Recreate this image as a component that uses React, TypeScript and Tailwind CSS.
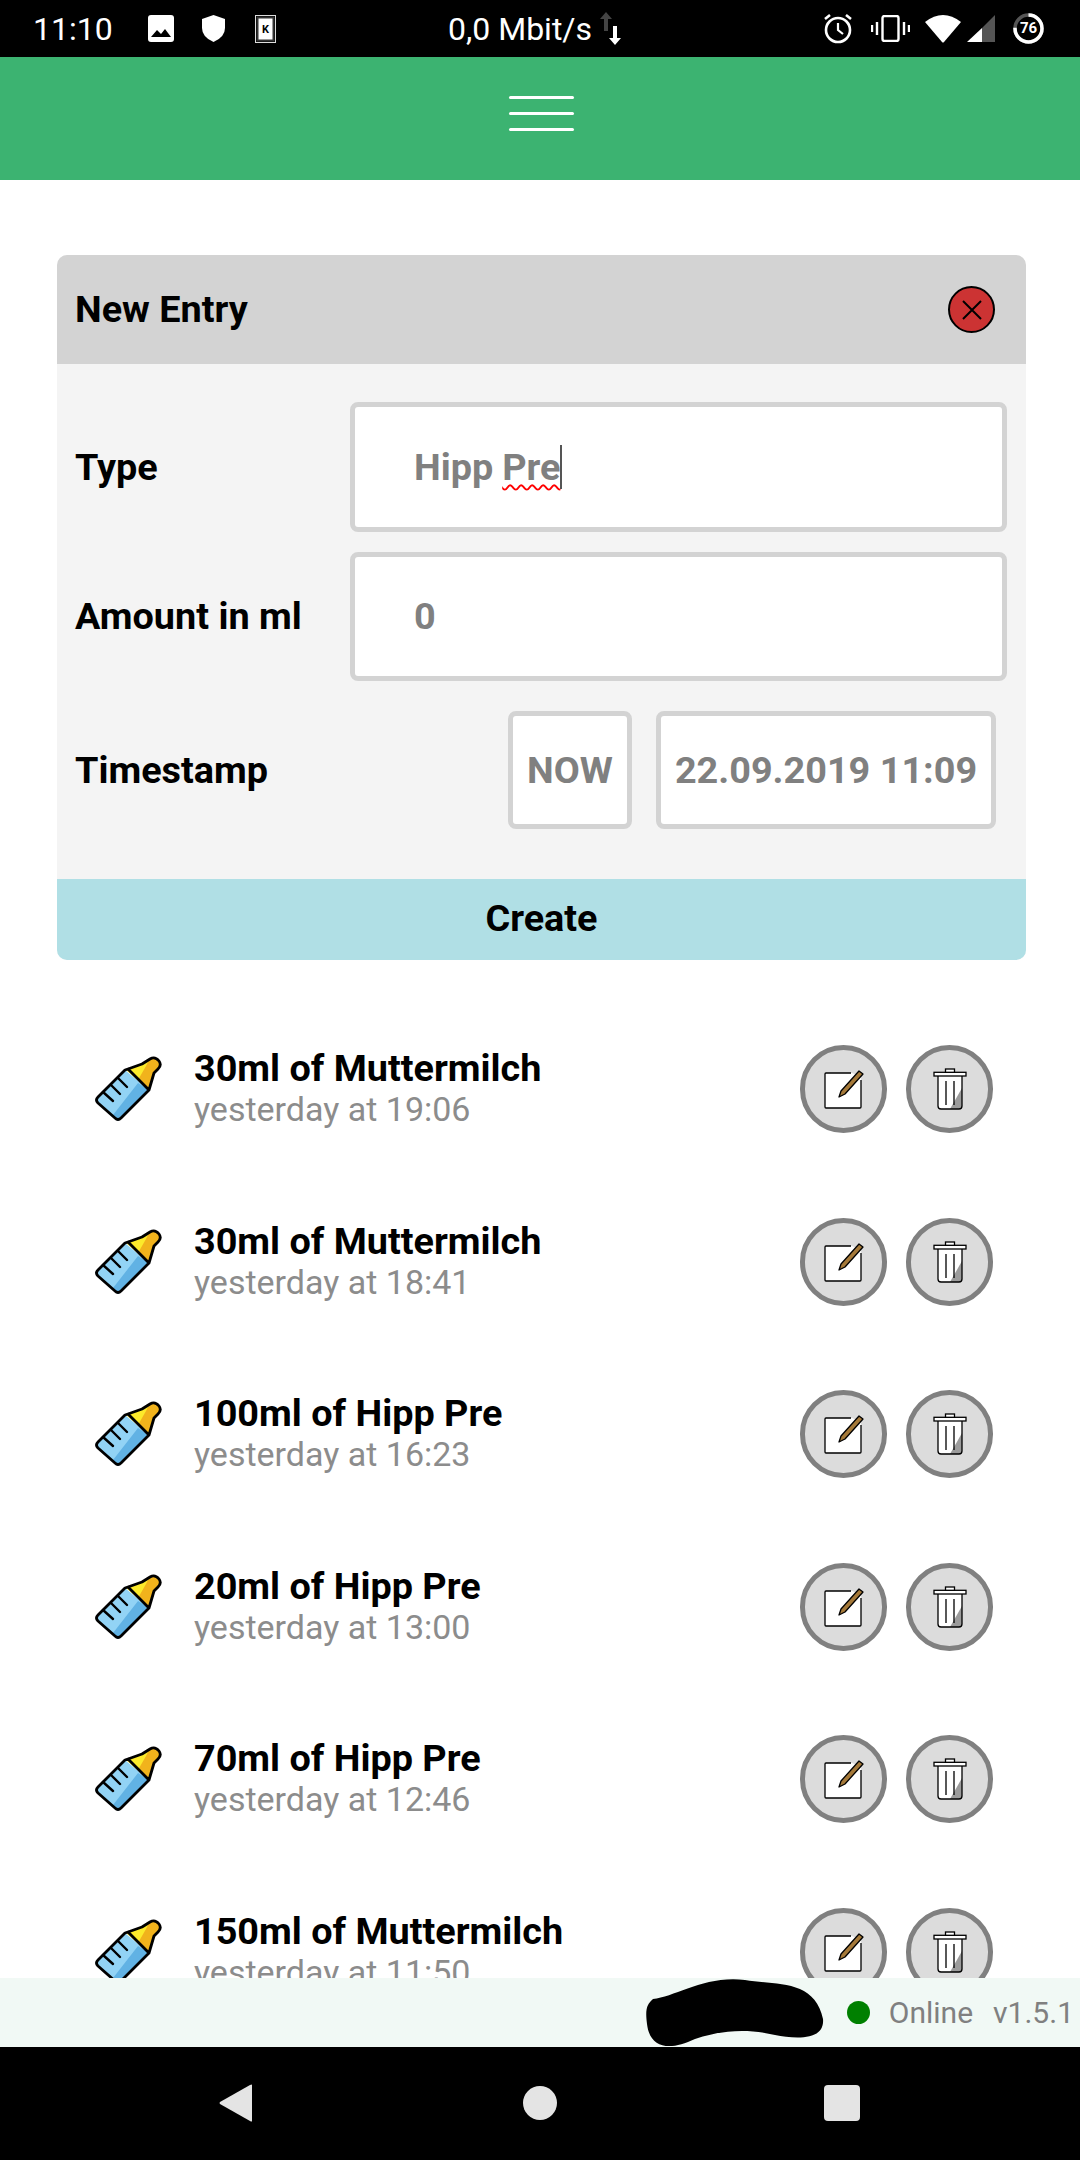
const entries = [
  { title: '30ml of Muttermilch', time: 'yesterday at 19:06' },
  { title: '30ml of Muttermilch', time: 'yesterday at 18:41' },
  { title: '100ml of Hipp Pre', time: 'yesterday at 16:23' },
  { title: '20ml of Hipp Pre', time: 'yesterday at 13:00' },
  { title: '70ml of Hipp Pre', time: 'yesterday at 12:46' },
  { title: '150ml of Muttermilch', time: 'yesterday at 11:50' },
];

const BottleIcon = () => (
  <svg width="70" height="70" viewBox="24 24 70 70" className="shrink-0">
    <path d="M56 40 L72 34 L80 28 L86 28 L90 33 L90 37 L84 43 L79 60 Z" fill="#fcea2b" />
    <path d="M68 50 L76 36 L80 28 L86 28 L90 33 L90 37 L84 43 L79 60 Z" fill="#f1b31c" />
    <path d="M26 70 L55 40 L79 60 L48 91 Z" fill="#92d3f5" />
    <path d="M43 85 L68 53 L79 60 L48 91 Z" fill="#61b2e4" />
    <path
      d="M58 39 L72 34 L80 29 Q85 26 89 31 Q92 35 88 39 L84 43 L79 60 M58 39 L79 60 L51 88 Q48 91 45 88 L28 73 Q25 70 28 67 L55 40 Z"
      fill="none"
      stroke="#000"
      strokeWidth="2.8"
      strokeLinejoin="round"
      strokeLinecap="round"
    />
    <path d="M33 62 L43 71 M41 55 L50 64 M48 48 L57 57" stroke="#000" strokeWidth="2.4" strokeLinecap="round" />
  </svg>
);

const EditIcon = () => (
  <svg width="42" height="42" viewBox="0 0 42 42">
    <path d="M2 5 H29 L38 9 V38 Q38 40 36 40 H4 Q2 40 2 38 Z" fill="#fff" />
    <path d="M28 5 H3 Q2 5 2 6 V39 Q2 40 3 40 H37 Q38 40 38 39 V12" fill="none" stroke="#000" strokeWidth="1.3" />
    <path d="M18 23 L36 3 L40 6 L22 26 L16 29 Z" fill="#a57939" stroke="#000" strokeWidth="1.3" strokeLinejoin="round" />
  </svg>
);

const TrashIcon = () => (
  <svg width="34" height="42" viewBox="0 0 34 42">
    <path d="M5 8 H29 V38 Q29 41 26 41 H8 Q5 41 5 38 Z" fill="#fff" />
    <path d="M29 20 V38 Q29 41 26 41 H17 Z" fill="#9b9b9b" />
    <path d="M5 8 V38 Q5 41 8 41 H26 Q29 41 29 38 V8" fill="none" stroke="#000" strokeWidth="1.3" />
    <rect x="1" y="4.3" width="32" height="3.7" fill="#fff" stroke="#000" strokeWidth="1.3" />
    <rect x="12.5" y="1" width="9" height="3.3" fill="#fff" stroke="#000" strokeWidth="1.3" />
    <path d="M13 13 V37 M21 13 V37" stroke="#000" strokeWidth="1.3" />
  </svg>
);

const StatusBar = () => (
  <div className="flex h-[57px] shrink-0 items-center bg-black pl-[33px] text-[32px] leading-none text-white">
    <span className="w-[115px]">11:10</span>
    <svg width="26" height="27" viewBox="0 0 26 27">
      <rect width="26" height="27" rx="3" fill="#fff" />
      <path d="M3 22 L9 15 L13 19 L17 14 L23 22 Z" fill="#000" />
    </svg>
    <svg width="23" height="27" viewBox="0 0 23 27" className="ml-[28px]">
      <path d="M11.5 0 L23 4 V13 Q23 22 11.5 27 Q0 22 0 13 V4 Z" fill="#fff" />
    </svg>
    <svg width="21" height="28" viewBox="0 0 21 28" className="ml-[30px]">
      <rect x="0.5" y="0.5" width="20" height="27" fill="none" stroke="#ddd" />
      <rect x="2.5" y="2.5" width="16" height="23" fill="#fff" stroke="#333" strokeWidth="2" />
      <text x="10.5" y="18" textAnchor="middle" fontSize="11" fontWeight="700" fontFamily="Roboto, sans-serif" fill="#000">K</text>
    </svg>
    <span className="ml-[172px]">0,0 Mbit/s</span>
    <svg width="23" height="33" viewBox="0 0 23 33" className="ml-[7px]">
      <path d="M7 0 L13 7 H9 V19 H5 V7 H1 Z" fill="#444" />
      <path d="M16 33 L10 26 H14 V14 H18 V26 H22 Z" fill="#fff" />
    </svg>
    <svg width="30" height="31" viewBox="0 0 30 31" className="ml-[201px]">
      <circle cx="15" cy="17" r="12" fill="none" stroke="#fff" strokeWidth="2.6" />
      <path d="M15 10 V17 L20 21" fill="none" stroke="#fff" strokeWidth="2.2" />
      <path d="M2 6 L7 2 M28 6 L23 2" stroke="#fff" strokeWidth="2.6" />
    </svg>
    <svg width="39" height="27" viewBox="0 0 39 27" className="ml-[18px]">
      <rect x="11.5" y="1" width="16" height="25" rx="2" fill="none" stroke="#fff" strokeWidth="2.4" />
      <path d="M6 7 V20 M1 10 V17 M33 7 V20 M38 10 V17" stroke="#fff" strokeWidth="2.4" />
    </svg>
    <svg width="36" height="29" viewBox="0 0 36 29" className="ml-[15px]">
      <path d="M0 8 Q18 -6 36 8 L19 28 Q18 29 17 28 Z" fill="#fff" />
    </svg>
    <svg width="28" height="27" viewBox="0 0 28 27" className="ml-[6px]">
      <path d="M28 0 V27 H15 V13 Z" fill="#555" />
      <path d="M15 13 V27 H0 Z" fill="#fff" />
    </svg>
    <div className="relative ml-[18px] flex h-[31px] w-[31px] items-center justify-center">
      <svg width="31" height="31" viewBox="0 0 31 31" className="absolute inset-0">
        <circle cx="15.5" cy="15.5" r="13.5" fill="none" stroke="#555" strokeWidth="3.5" />
        <circle cx="15.5" cy="15.5" r="13.5" fill="none" stroke="#fff" strokeWidth="3.5" strokeDasharray="64 85" transform="rotate(-90 15.5 15.5)" />
      </svg>
      <span className="relative text-[15px] font-bold">76</span>
    </div>
  </div>
);

export default function App() {
  return (
    <div className="flex h-[2160px] w-[1080px] flex-col overflow-hidden bg-white font-['Roboto',sans-serif] text-black">
      <StatusBar />

      <header className="flex h-[123px] shrink-0 items-center justify-center bg-[#3cb371] pb-[11px] pl-[3px]">
        <div className="flex w-[65px] flex-col gap-[13px]">
          <div className="h-[3px] rounded-full bg-white" />
          <div className="h-[3px] rounded-full bg-white" />
          <div className="h-[3px] rounded-full bg-white" />
        </div>
      </header>

      <main className="min-h-0 flex-1 overflow-hidden">
        <section className="mx-[57px] mr-[54px] mt-[75px] overflow-hidden rounded-[10px] bg-[#f4f4f4]">
          <div className="flex h-[109px] items-center justify-between bg-[#d3d3d3] pl-[18px] pr-[31px]">
            <h2 className="text-[37.8px] font-bold">New Entry</h2>
            <div className="flex h-[47px] w-[47px] items-center justify-center rounded-full border-2 border-black bg-[#cc3333]">
              <svg width="24" height="24" viewBox="0 0 24 24">
                <path d="M3 3 L21 21 M21 3 L3 21" stroke="#000" strokeWidth="2" />
              </svg>
            </div>
          </div>

          <div className="pb-[50px] pl-[18px] pr-[19px] pt-[38px]">
            <div className="flex h-[130px] items-center justify-between">
              <span className="text-[37.8px] font-bold">Type</span>
              <div className="flex h-full w-[657px] items-center rounded-[8px] border-[5px] border-[#d3d3d3] bg-white pl-[59px] text-[37.8px] font-bold text-[#808080]">
                <span>Hipp</span>
                <span className="ml-[9px] underline decoration-[#ff0000] decoration-wavy decoration-2 underline-offset-4">Pre</span>
                <span className="h-[44px] w-[2px] bg-[#555]" />
              </div>
            </div>
            <div className="mt-[20px] flex h-[129px] items-center justify-between">
              <span className="text-[37.8px] font-bold">Amount in ml</span>
              <div className="flex h-full w-[657px] items-center rounded-[8px] border-[5px] border-[#d3d3d3] bg-white pl-[59px] text-[37.8px] font-bold text-[#808080]">
                0
              </div>
            </div>
            <div className="mt-[30px] flex h-[118px] items-center">
              <span className="text-[37.8px] font-bold">Timestamp</span>
              <div className="ml-auto mr-[11px] flex h-full gap-[24px] text-[37.8px] font-bold text-[#808080]">
                <div className="flex w-[124px] items-center justify-center rounded-[8px] border-[5px] border-[#d3d3d3] bg-white">NOW</div>
                <div className="flex w-[340px] items-center justify-center rounded-[8px] border-[5px] border-[#d3d3d3] bg-white">22.09.2019 11:09</div>
              </div>
            </div>
          </div>

          <div className="flex h-[81px] items-center justify-center bg-[#b0dfe5] pb-[2px] text-[37.8px] font-bold">Create</div>
        </section>

        <ul className="mt-[43px]">
          {entries.map((entry) => (
            <li key={entry.time} className="flex h-[172.5px] items-center pl-[94px] pr-[87px]">
              <BottleIcon />
              <div className="ml-[30px] flex-1 pb-[2px]">
                <div className="text-[37.8px] font-bold leading-[42px]">{entry.title}</div>
                <div className="text-[34px] leading-[40px] text-[#8c8c8c]">{entry.time}</div>
              </div>
              <div className="flex gap-[19px]">
                <button className="flex h-[88px] w-[87px] items-center justify-center rounded-full border-[5px] border-[#808080] bg-[#dcdcdc]">
                  <EditIcon />
                </button>
                <button className="flex h-[88px] w-[87px] items-center justify-center rounded-full border-[5px] border-[#808080] bg-[#dcdcdc]">
                  <TrashIcon />
                </button>
              </div>
            </li>
          ))}
        </ul>
      </main>

      <footer className="relative flex h-[69px] shrink-0 items-center justify-end bg-[#f1f9f5] pr-[6px] text-[30px] text-[#808080]">
        <svg width="180" height="68" viewBox="0 0 180 68" className="absolute left-[645px] top-[1px]">
          <path d="M8 20 C30 18 60 -4 100 1 C130 6 170 0 178 40 C180 62 150 60 130 56 C105 50 80 50 50 60 C25 72 5 70 2 45 C0 30 2 25 8 20 Z" fill="#000" />
        </svg>
        <span className="h-[23px] w-[23px] rounded-full bg-[#008000]" />
        <span className="ml-[19px]">Online</span>
        <span className="ml-[20px]">v1.5.1</span>
      </footer>

      <nav className="flex h-[113px] shrink-0 items-center bg-black pb-[2px]">
        <svg width="34" height="38" viewBox="0 0 34 38" className="ml-[219px]">
          <path d="M33 1 V37 Q33 38 31 37 L1 20 Q0 19 1 18 L31 1 Q33 0 33 1 Z" fill="#e4e4e4" />
        </svg>
        <span className="ml-[270px] h-[34px] w-[34px] rounded-full bg-[#e4e4e4]" />
        <span className="ml-[267px] h-[36px] w-[36px] rounded-[4px] bg-[#e4e4e4]" />
      </nav>
    </div>
  );
}
